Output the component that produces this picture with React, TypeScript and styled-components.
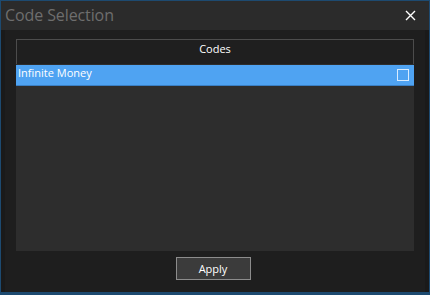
import React, {useState} from 'react';
import styled, {createGlobalStyle} from "styled-components";

const Global = createGlobalStyle`
  html, body {
    margin: 0;
    padding: 0;
    background: #1e1e1e;
  }
  body {
    font-family: "Open Sans", "Noto Sans", sans-serif;
  }
`

const StyledWindow = styled.div`
  width: 430px;
  height: 295px;
  box-sizing: border-box;
  border: 1px solid #1d4a70;
  border-bottom-width: 3px;
  background: #1e1e1e;
  display: flex;
  flex-direction: column;
`
const StyledTitleBar = styled.div`
  height: 29px;
  flex-shrink: 0;
  background: #2b2b2b;
  display: flex;
  align-items: center;
  justify-content: space-between;
  padding: 0 13px 1px 4px;
  box-sizing: border-box;
`
const StyledTitle = styled.div`
  color: #6e6e6e;
  font-size: 16px;
  letter-spacing: -0.1px;
`
const StyledClose = styled.button`
  background: none;
  border: none;
  padding: 0;
  width: 11px;
  height: 11px;
  display: flex;
  cursor: pointer;
`
const StyledBody = styled.div`
  flex: 1;
  display: flex;
  flex-direction: column;
  align-items: center;
  padding: 9px 15px 9px 15px;
  border-left: 4px solid #1a1a1a;
  border-right: 4px solid #1a1a1a;
  gap: 6px;
`
const StyledList = styled.div`
  align-self: stretch;
  height: 212px;
  margin: 0 -4px;
  background: #2d2d2d;
  display: flex;
  flex-direction: column;
`
const StyledHeader = styled.div`
  height: 25px;
  flex-shrink: 0;
  box-sizing: border-box;
  border: 1px solid #4c4c4c;
  border-bottom: none;
  background: #1f1f1f;
  color: #ffffff;
  font-size: 11px;
  display: flex;
  align-items: center;
  justify-content: center;
  padding-bottom: 7px;
`
const StyledRow = styled.div<{ selected?: boolean }>`
  height: 21px;
  margin-top: 1px;
  box-sizing: border-box;
  background: ${p => p.selected ? "#4fa3f2" : "transparent"};
  border-bottom: 1px solid ${p => p.selected ? "#3a7fc4" : "transparent"};
  color: #ffffff;
  font-size: 11px;
  display: flex;
  align-items: center;
  justify-content: space-between;
  padding: 0 5px 5px 2px;
`
const StyledCheck = styled.div<{ checked?: boolean }>`
  width: 10px;
  height: 10px;
  margin-top: 5px;
  border: 1px solid #d8ecff;
  background: ${p => p.checked ? "#ffffff" : "transparent"};
`
const StyledButton = styled.button`
  width: 75px;
  height: 23px;
  margin-right: 4px;
  background: #3b3b3b;
  border: 1px solid #8c8c8c;
  color: #ffffff;
  font-family: "Open Sans", sans-serif;
  font-size: 11px;
  padding: 0 0 1px;
  cursor: pointer;
`

const codes = [{name: "Infinite Money"}]

function App() {
    const [checked, setChecked] = useState<boolean[]>(codes.map(() => false))

    return (
        <StyledWindow>
            <Global/>
            <StyledTitleBar>
                <StyledTitle>Code Selection</StyledTitle>
                <StyledClose>
                    <svg width="11" height="11" viewBox="0 0 11 11">
                        <path d="M1 1 L10 10 M10 1 L1 10" stroke="#ffffff" strokeWidth="1.4"/>
                    </svg>
                </StyledClose>
            </StyledTitleBar>
            <StyledBody>
                <StyledList>
                    <StyledHeader>Codes</StyledHeader>
                    {codes.map((c, i) =>
                        <StyledRow key={c.name} selected={i === 0}
                                   onClick={() => setChecked(checked.map((v, j) => j === i ? !v : v))}>
                            {c.name}
                            <StyledCheck checked={checked[i]}/>
                        </StyledRow>
                    )}
                </StyledList>
                <StyledButton>Apply</StyledButton>
            </StyledBody>
        </StyledWindow>
    );
}

export default App;
